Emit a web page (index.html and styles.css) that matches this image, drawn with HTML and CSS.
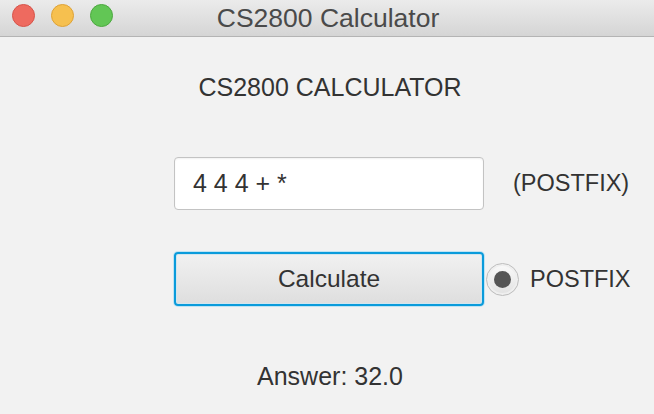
FILE: index.html
```html
<!DOCTYPE html>
<html>
<head>
<meta charset="utf-8">
<link rel="stylesheet" href="styles.css">
</head>
<body>
<div class="window">
  <div class="titlebar">
    <div class="lights">
      <span class="light red"></span>
      <span class="light yellow"></span>
      <span class="light green"></span>
    </div>
    <div class="wtitle">CS2800 Calculator</div>
  </div>
  <div class="content">
    <div class="heading">CS2800 CALCULATOR</div>
    <div class="row row-input">
      <div class="field">4 4 4 + *</div>
      <div class="hint">(POSTFIX)</div>
    </div>
    <div class="row row-button">
      <div class="button">Calculate</div>
      <div class="radio"><span class="dot"></span></div>
      <div class="radio-label">POSTFIX</div>
    </div>
    <div class="answer">Answer: 32.0</div>
  </div>
</div>
</body>
</html>
```
FILE: styles.css
```css
html, body {
  margin: 0;
  padding: 0;
  background: #f2f2f2;
  font-family: "Liberation Sans", Arial, sans-serif;
  color: #333333;
}
.window {
  width: 654px;
  height: 414px;
  overflow: hidden;
}
.titlebar {
  position: relative;
  height: 36px;
  background: linear-gradient(#ebebeb, #d5d5d5);
  border-bottom: 1px solid #b4b4b4;
  display: flex;
  align-items: center;
  justify-content: center;
}
.lights {
  position: absolute;
  left: 12px;
  top: 4px;
  display: flex;
  gap: 16px;
}
.light {
  width: 23px;
  height: 23px;
  border-radius: 50%;
  box-sizing: border-box;
}
.red { background: #ee6a5f; border: 1px solid #d6544a; }
.yellow { background: #f6c04f; border: 1px solid #dea236; }
.green { background: #62c655; border: 1px solid #4ca83f; }
.wtitle {
  font-size: 26.5px;
  line-height: 30px;
  color: #4a4a4a;
  margin-left: 2px;
}
.content {
  display: flex;
  flex-direction: column;
}
.heading {
  margin-top: 36px;
  text-align: center;
  font-size: 25px;
  line-height: 28px;
  padding-left: 6px;
}
.row {
  display: flex;
  align-items: center;
  margin-left: 174px;
}
.row-input {
  margin-top: 56px;
}
.field {
  width: 310px;
  height: 53px;
  box-sizing: border-box;
  border: 1px solid #c3c3c3;
  border-radius: 4px;
  background: #ffffff;
  box-shadow: inset 0 1px 2px rgba(0,0,0,0.06);
  font-size: 25px;
  line-height: 51px;
  padding-left: 18px;
}
.hint {
  margin-left: 29px;
  font-size: 23.5px;
}
.row-button {
  margin-top: 42px;
}
.button {
  width: 310px;
  height: 54px;
  box-sizing: border-box;
  border: 2px solid #0a9bdb;
  border-radius: 4px;
  box-shadow: 0 0 0 1px #bfe3f3, inset 0 0 0 1px #d2e6ef;
  background: linear-gradient(#f1f1f1, #dedede);
  font-size: 24.5px;
  line-height: 50px;
  text-align: center;
}
.radio {
  margin-left: 2px;
  width: 33px;
  height: 33px;
  box-sizing: border-box;
  border-radius: 50%;
  border: 1px solid #bdbdbd;
  background: linear-gradient(#fafafa, #e2e2e2);
  box-shadow: inset 0 0 0 2px #efefef;
  display: flex;
  align-items: center;
  justify-content: center;
}
.dot {
  width: 17px;
  height: 17px;
  border-radius: 50%;
  background: #555555;
}
.radio-label {
  margin-left: 11px;
  font-size: 23.5px;
}
.answer {
  margin-top: 56px;
  text-align: center;
  font-size: 25px;
  padding-left: 6px;
}
```
